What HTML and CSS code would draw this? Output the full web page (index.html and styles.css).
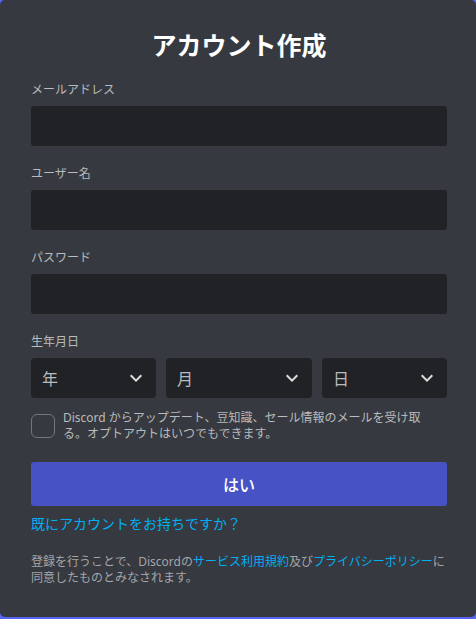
FILE: index.html
```html
<!DOCTYPE html>
<html lang="ja">
<head>
<meta charset="utf-8">
<title>アカウント作成</title>
<link rel="stylesheet" href="styles.css">
</head>
<body>
<div class="panel">
  <h1 class="title">アカウント作成</h1>
  <div class="field">
    <label class="label">メールアドレス</label>
    <div class="input"></div>
  </div>
  <div class="field">
    <label class="label">ユーザー名</label>
    <div class="input"></div>
  </div>
  <div class="field">
    <label class="label">パスワード</label>
    <div class="input"></div>
  </div>
  <div class="field">
    <label class="label">生年月日</label>
    <div class="dates">
      <div class="select"><span>年</span><svg class="chev" width="24" height="24" viewBox="0 0 24 24"><path fill="currentColor" d="M16.59 8.59L12 13.17L7.41 8.59L6 10L12 16L18 10Z"/></svg></div>
      <div class="select"><span>月</span><svg class="chev" width="24" height="24" viewBox="0 0 24 24"><path fill="currentColor" d="M16.59 8.59L12 13.17L7.41 8.59L6 10L12 16L18 10Z"/></svg></div>
      <div class="select"><span>日</span><svg class="chev" width="24" height="24" viewBox="0 0 24 24"><path fill="currentColor" d="M16.59 8.59L12 13.17L7.41 8.59L6 10L12 16L18 10Z"/></svg></div>
    </div>
  </div>
  <div class="optin">
    <div class="checkbox"></div>
    <p class="optin-text">Discord からアップデート、豆知識、セール情報のメールを受け取る。オプトアウトはいつでもできます。</p>
  </div>
  <button class="btn">はい</button>
  <a class="login">既にアカウントをお持ちですか？</a>
  <div class="terms">
    <div class="tline"><span>登録を行うことで、Discordの</span><a class="tlink">サービス利用規約</a><span>及び</span><a class="tlink">プライバシーポリシー</a><span>に</span></div>
    <div class="tline">同意したものとみなされます。</div>
  </div>
</div>
</body>
</html>
```
FILE: styles.css
```css
* { box-sizing: border-box; }
html, body { margin: 0; padding: 0; }
body {
  width: 476px;
  height: 619px;
  overflow: hidden;
  background: #5865f2;
  font-family: "Noto Sans", "Noto Sans CJK JP", sans-serif;
}
.panel {
  width: 476px;
  height: 617px;
  background: #36393f;
  border-radius: 5px;
  padding: 28px 29px 0 31px;
  display: flex;
  flex-direction: column;
}
.title {
  margin: 0;
  font-size: 25px;
  line-height: 34px;
  font-weight: 700;
  color: #ffffff;
  text-align: center;
}
.field {
  display: flex;
  flex-direction: column;
  margin-top: 20px;
}
.label {
  font-size: 12px;
  line-height: 16px;
  color: #b9bbbe;
  margin-bottom: 8px;
}
.input {
  height: 40px;
  background: #202225;
  border-radius: 3px;
}
.dates {
  display: grid;
  grid-template-columns: 125fr 146fr 125fr;
  gap: 10px;
}
.select {
  height: 40px;
  background: #202225;
  border-radius: 4px;
  display: flex;
  align-items: center;
  justify-content: space-between;
  padding: 0 8px 0 11px;
  color: #b9bbbe;
  font-size: 16px;
}
.chev { color: #dcddde; }
.optin {
  display: flex;
  align-items: center;
  gap: 8px;
  margin-top: 12px;
}
.checkbox {
  flex: 0 0 24px;
  width: 24px;
  height: 24px;
  border: 1px solid #72767d;
  border-radius: 6px;
}
.optin-text {
  margin: 0;
  font-size: 12px;
  line-height: 16px;
  color: #b9bbbe;
  padding-right: 18px;
}
.btn {
  margin-top: 20px;
  height: 44px;
  border: none;
  border-radius: 3px;
  background: #4752c4;
  color: #ffffff;
  font-family: inherit;
  font-size: 16px;
  font-weight: 500;
}
.login {
  margin-top: 8px;
  font-size: 14px;
  line-height: 20px;
  color: #00aff4;
}
.terms {
  margin-top: 20px;
  font-size: 12px;
  line-height: 16px;
  color: #a3a6aa;
}
.tline { white-space: nowrap; }
.tlink { color: #00aff4; }
```
